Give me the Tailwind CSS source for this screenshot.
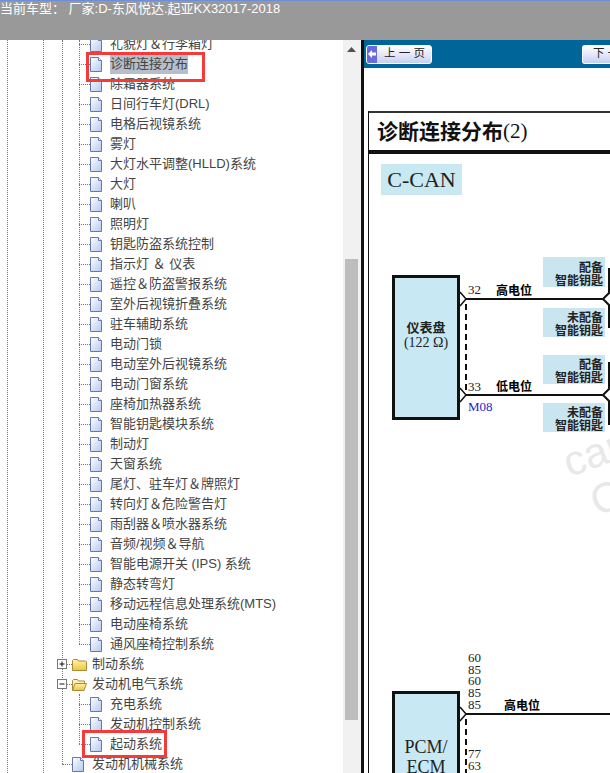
<!DOCTYPE html>
<html lang="zh">
<head>
    <meta charset="UTF-8">
    <title>诊断连接分布</title>
    <script src="https://cdn.jsdelivr.net/npm/@tailwindcss/browser@4"></script>
</head>
<body class="relative w-[610px] h-[773px] overflow-hidden bg-white font-['Liberation_Sans','Noto_Sans_CJK_SC',sans-serif]">
    <!-- shared tree icons -->
    <svg class="absolute w-0 h-0">
        <defs>
            <linearGradient id="fileFill" x1="0" y1="0" x2="1" y2="1"><stop offset="0" stop-color="#ffffff"/><stop offset="1" stop-color="#b4c8ee"/></linearGradient>
            <linearGradient id="folderFill" x1="0" y1="0" x2="0" y2="1"><stop offset="0" stop-color="#fff3b0"/><stop offset="1" stop-color="#f2c438"/></linearGradient>
        </defs>
    </svg>

    <!-- top bar -->
    <header class="relative z-10 h-10 bg-[#999999] border-t border-[#6d8fd8] text-white text-[13px] leading-[15px]">当前车型： 厂家:D-东风悦达.起亚KX32017-2018</header>

    <div class="flex h-[733px] overflow-hidden">
        <!-- tree -->
        <aside class="relative w-[343px] h-full overflow-hidden shrink-0 text-[13px] text-[#444444]">
            <div class="absolute left-[7px] top-0 h-full border-l border-dotted border-[#777]"></div>
            <div class="absolute left-[43px] top-0 h-full border-l border-dotted border-[#777]"></div>
            <div class="absolute left-[62px] top-0 h-[724px] border-l border-dotted border-[#777]"></div>
            <div class="absolute left-[79px] top-0 h-[604px] border-l border-dotted border-[#777]"></div>
            <div class="absolute left-[79px] top-[654px] h-[50px] border-l border-dotted border-[#777]"></div>
            <ul id="tree" class="relative -mt-[6px]"></ul>
        </aside>

        <!-- scrollbar -->
        <div class="w-[18px] h-full shrink-0 flex flex-col items-center bg-[#f1f1f1] pr-[1px] pt-[7px]">
            <svg class="w-[9px] h-[5px]" viewBox="0 0 9 5"><path d="M4.5 0L9 5H0z" fill="#505050"/></svg>
            <div class="w-[13px] h-[461px] mt-[207px] bg-[#bdbdbd]"></div>
        </div>

        <!-- manual page -->
        <main class="flex-1 min-w-0 border-l-[3px] border-[#111111]">
            <div class="h-7 bg-[#006699] flex items-center justify-between pl-[2px]">
                <div class="w-[66px] h-[19px] flex items-center rounded-[3px] border border-white bg-gradient-to-b from-white to-[#c8d0f2] overflow-hidden">
                    <span class="w-[10px] h-full shrink-0 bg-[#6a6ae0] flex items-center justify-center"><svg class="w-2 h-2" viewBox="0 0 8 8"><path d="M0 4l4-4v2.500h4v3H4V8z" fill="#fff"/></svg></span>
                    <span class="ml-[7px] text-[11.500px] leading-none text-[#222] whitespace-nowrap">上 一 页</span>
                </div>
                <div class="w-[28px] h-[19px] flex items-center rounded-l-[3px] border border-r-0 border-white bg-gradient-to-b from-white to-[#c8d0f2] overflow-hidden">
                    <span class="ml-[10px] text-[11.500px] leading-none text-[#222] whitespace-nowrap">下 一</span>
                </div>
            </div>

            <div class="mt-[43px] ml-[4px] border-l border-[#111111]">
                <h1 class="h-[43px] border-t-2 border-[#333333] border-b-4 border-b-[#111111] pl-2 flex items-center text-[21px] font-bold text-[#111] whitespace-nowrap">诊断连接分布<span class="font-['Liberation_Serif'] font-normal">(2)</span></h1>

                <div class="relative h-[619px] overflow-hidden font-['Liberation_Serif','Noto_Sans_CJK_SC',serif] text-[13px] leading-[12px] text-[#222]">
                    <!-- watermark -->
                    <span class="absolute left-[194px] top-[276px] font-['Liberation_Sans'] text-[42px] leading-[48px] text-[#e8e8e8] -rotate-[20deg]">car</span>
                    <span class="absolute left-[222px] top-[320px] font-['Liberation_Sans'] text-[42px] leading-[48px] text-[#e8e8e8] -rotate-[20deg]">C</span>

                    <div class="absolute left-[12px] top-[10px] w-[81px] h-[31px] bg-[#c9e9f2] flex items-center justify-center text-[22px] text-[#222]">C-CAN</div>

                    <!-- wires -->
                    <svg class="absolute left-0 top-0" width="241" height="619" viewBox="369 154 241 619" fill="none" stroke="#111">
                        <path d="M466 299H603L609 293V268M603 299L609 305V328" stroke-width="2"/>
                        <path d="M466 395H603L609 389V362M603 395L609 401V425" stroke-width="2"/>
                        <path d="M466 714H610" stroke-width="2"/>
                        <path d="M466 304V390" stroke-width="2" stroke-dasharray="6 4"/>
                        <path d="M466 719V773" stroke-width="2" stroke-dasharray="6 4"/>
                        <path d="M460 292L466 299L460 306" fill="#fff" stroke-width="1.500"/>
                        <path d="M460 388L466 395L460 402" fill="#fff" stroke-width="1.500"/>
                        <path d="M460 707L466 714L460 721" fill="#fff" stroke-width="1.500"/>
                    </svg>

                    <!-- instrument cluster -->
                    <div class="absolute left-[23px] top-[121px] w-[68px] h-[145px] border-[3px] border-[#111] bg-[#c8e8f3] flex flex-col items-center pt-[41px]">
                        <span class="text-[13px] leading-[16px] font-bold font-['Noto_Sans_CJK_SC']">仪表盘</span>
                        <span class="text-[14px] leading-[15px] whitespace-nowrap">(122 Ω)</span>
                    </div>
                    <span class="absolute left-[99px] top-[130px]">32</span>
                    <span class="absolute left-[127px] top-[130px] text-[12px] font-bold text-black font-['Noto_Sans_CJK_SC']">高电位</span>
                    <span class="absolute left-[99px] top-[227px]">33</span>
                    <span class="absolute left-[127px] top-[226px] text-[12px] font-bold text-black font-['Noto_Sans_CJK_SC']">低电位</span>
                    <span class="absolute left-[99px] top-[247px] text-[#2525c8]">M08</span>

                    <!-- key options -->
                    <div class="absolute left-[174px] top-[103px] w-[62px] h-[30px] bg-[#c9e5ef] pt-[3px] pr-[2px] text-right text-[12px] font-bold leading-[13px] text-[#222] font-['Noto_Sans_CJK_SC']">配备<br>智能钥匙</div>
                    <div class="absolute left-[174px] top-[154px] w-[62px] h-[29px] bg-[#c9e5ef] pt-[2px] pr-[2px] text-right text-[12px] font-bold leading-[13px] text-[#222] font-['Noto_Sans_CJK_SC']">未配备<br>智能钥匙</div>
                    <div class="absolute left-[174px] top-[201px] w-[62px] h-[29px] bg-[#c9e5ef] pt-[2px] pr-[2px] text-right text-[12px] font-bold leading-[13px] text-[#222] font-['Noto_Sans_CJK_SC']">配备<br>智能钥匙</div>
                    <div class="absolute left-[174px] top-[249px] w-[62px] h-[29px] bg-[#c9e5ef] pt-[2px] pr-[2px] text-right text-[12px] font-bold leading-[13px] text-[#222] font-['Noto_Sans_CJK_SC']">未配备<br>智能钥匙</div>

                    <!-- PCM -->
                    <div class="absolute left-[99px] top-[498px] leading-[11.700px]">60<br>85<br>60<br>85<br>85</div>
                    <span class="absolute left-[135px] top-[545px] text-[12px] font-bold text-black font-['Noto_Sans_CJK_SC']">高电位</span>
                    <div class="absolute left-[23px] top-[537px] w-[68px] h-[120px] border-[3px] border-[#111] bg-[#c8e8f3] pt-[43px] text-center text-[18px] leading-[20px]">PCM/<br>ECM</div>
                    <div class="absolute left-[99px] top-[594px]">77<br>63</div>
                </div>
            </div>
        </main>
    </div>

    <!-- red annotations -->
    <div class="absolute left-[86px] top-[52px] w-[119px] h-[30px] border-[3px] border-[#f53a3a]"></div>
    <div class="absolute left-[82px] top-[730px] w-[85px] h-[28px] border-[3px] border-[#f53a3a]"></div>

    <script>
        const fileIcon = '<svg class="w-3 h-[15px] shrink-0" viewBox="0 0 12 15"><path d="M.5.500h8l3 3v11H.5z" fill="url(#fileFill)" stroke="#6478b0"/><path d="M8.500.500v3h3" fill="#fff" stroke="#6478b0"/></svg>';
        const folderClosed = '<svg class="w-[15px] h-[13px] shrink-0" viewBox="0 0 15 13"><path d="M.5 12.500V2.500l1-1h4l1 1.500h7l1 1v8.500z" fill="url(#folderFill)" stroke="#a58b3a"/></svg>';
        const folderOpen = '<svg class="w-[15px] h-[13px] shrink-0" viewBox="0 0 15 13"><path d="M.5 12.500V2.500l1-1h4l1 1.500h6v2" fill="#fff2b0" stroke="#a58b3a"/><path d="M.5 12.500l2.500-7h11.500l-2.500 7z" fill="url(#folderFill)" stroke="#a58b3a"/></svg>';
        const boxIcon = (open) => `<svg class="w-[10px] h-[10px] shrink-0" viewBox="0 0 10 10"><rect x=".5" y=".5" width="9" height="9" fill="#fff" stroke="#777"/><path d="M2.500 5h5${open ? '' : 'M5 2.500v5'}" stroke="#111"/></svg>`;

        const leaves = ['礼貌灯＆行李箱灯', '诊断连接分布', '除霜器系统', '日间行车灯(DRL)', '电格后视镜系统', '雾灯', '大灯水平调整(HLLD)系统', '大灯', '喇叭', '照明灯', '钥匙防盗系统控制', '指示灯 ＆ 仪表', '遥控＆防盗警报系统', '室外后视镜折叠系统', '驻车辅助系统', '电动门锁', '电动室外后视镜系统', '电动门窗系统', '座椅加热器系统', '智能钥匙模块系统', '制动灯', '天窗系统', '尾灯、驻车灯＆牌照灯', '转向灯＆危险警告灯', '雨刮器＆喷水器系统', '音频/视频＆导航', '智能电源开关 (IPS) 系统', '静态转弯灯', '移动远程信息处理系统(MTS)', '电动座椅系统', '通风座椅控制系统'];

        const leafRow = (name) => `<li class="h-5 flex items-center pl-[79px] whitespace-pre"><span class="w-[11px] border-t border-dotted border-[#777]"></span>${fileIcon}<span class="ml-[8px] ${name === '诊断连接分布' ? 'bg-[#b6bfc9]' : ''}">${name}</span></li>`;
        const folderRow = (name, open) => `<li class="h-5 flex items-center pl-[57px]">${boxIcon(open)}<span class="w-[5px] border-t border-dotted border-[#777]"></span>${open ? folderOpen : folderClosed}<span class="ml-[5px]">${name}</span></li>`;

        document.getElementById('tree').innerHTML = leaves.map(leafRow).join('')
            + folderRow('制动系统', false)
            + folderRow('发动机电气系统', true)
            + ['充电系统', '发动机控制系统', '起动系统'].map(leafRow).join('')
            + `<li class="h-5 flex items-center pl-[62px]"><span class="w-[10px] border-t border-dotted border-[#777]"></span>${fileIcon}<span class="ml-[8px]">发动机机械系统</span></li>`;
    </script>
</body>
</html>
